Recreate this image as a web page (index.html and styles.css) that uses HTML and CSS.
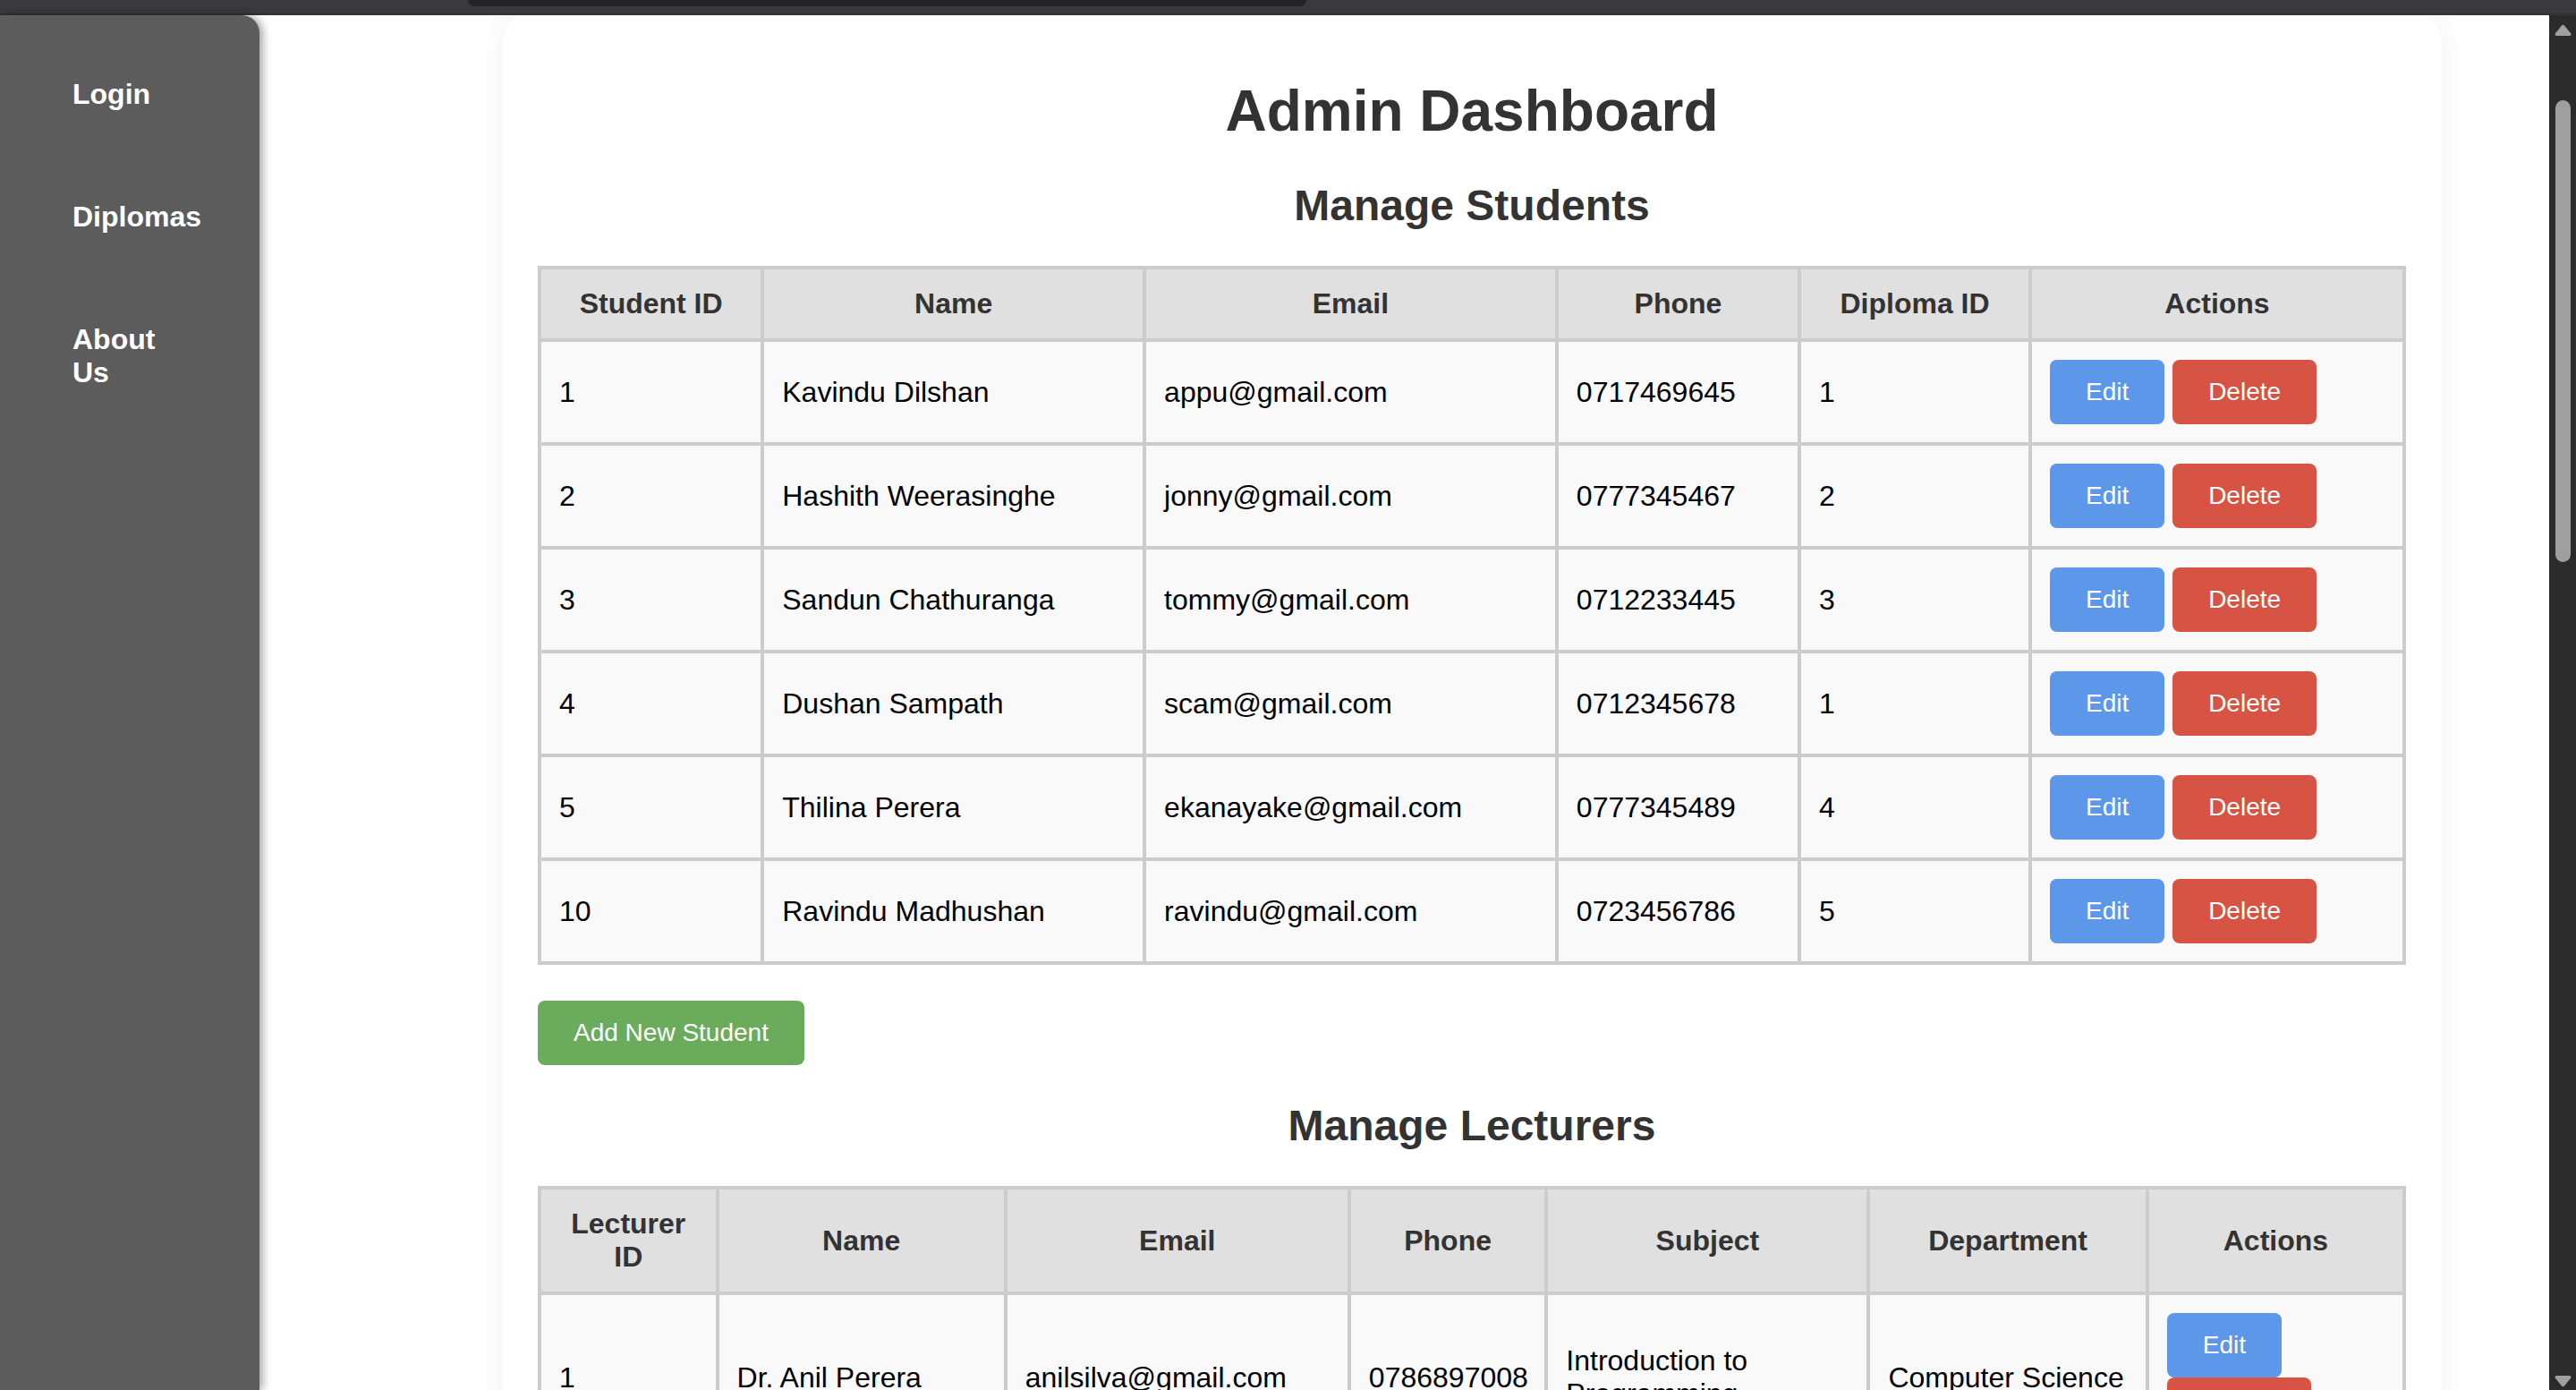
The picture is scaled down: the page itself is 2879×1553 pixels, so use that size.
FILE: index.html
```html
<!DOCTYPE html>
<html lang="en">
<head>
<meta charset="utf-8">
<title>Admin Dashboard</title>
<link rel="stylesheet" href="styles.css">
</head>
<body>
<div class="topbar"><div class="topbar-tab"></div></div>
<div class="layout">
  <nav class="sidebar">
    <a class="side-link" href="#">Login</a>
    <a class="side-link" href="#">Diplomas</a>
    <a class="side-link" href="#">About Us</a>
  </nav>
  <main class="main">
    <div class="card">
      <h1 class="page-title">Admin Dashboard</h1>

      <h2 class="section-title">Manage Students</h2>
      <table class="data-table">
        <thead>
          <tr><th>Student ID</th><th>Name</th><th>Email</th><th>Phone</th><th>Diploma ID</th><th>Actions</th></tr>
        </thead>
        <tbody>
          <tr><td>1</td><td>Kavindu Dilshan</td><td>appu@gmail.com</td><td>0717469645</td><td>1</td><td><button class="btn btn-edit">Edit</button> <button class="btn btn-delete">Delete</button></td></tr>
          <tr><td>2</td><td>Hashith Weerasinghe</td><td>jonny@gmail.com</td><td>0777345467</td><td>2</td><td><button class="btn btn-edit">Edit</button> <button class="btn btn-delete">Delete</button></td></tr>
          <tr><td>3</td><td>Sandun Chathuranga</td><td>tommy@gmail.com</td><td>0712233445</td><td>3</td><td><button class="btn btn-edit">Edit</button> <button class="btn btn-delete">Delete</button></td></tr>
          <tr><td>4</td><td>Dushan Sampath</td><td>scam@gmail.com</td><td>0712345678</td><td>1</td><td><button class="btn btn-edit">Edit</button> <button class="btn btn-delete">Delete</button></td></tr>
          <tr><td>5</td><td>Thilina Perera</td><td>ekanayake@gmail.com</td><td>0777345489</td><td>4</td><td><button class="btn btn-edit">Edit</button> <button class="btn btn-delete">Delete</button></td></tr>
          <tr><td>10</td><td>Ravindu Madhushan</td><td>ravindu@gmail.com</td><td>0723456786</td><td>5</td><td><button class="btn btn-edit">Edit</button> <button class="btn btn-delete">Delete</button></td></tr>
        </tbody>
      </table>
      <div class="add-row"><button class="btn btn-add">Add New Student</button></div>

      <h2 class="section-title">Manage Lecturers</h2>
      <table class="data-table lecturer-table">
        <colgroup>
          <col class="lc-id">
          <col class="lc-name">
          <col class="lc-email">
          <col class="lc-phone">
          <col class="lc-subject">
          <col class="lc-dept">
          <col class="lc-actions">
        </colgroup>
        <thead>
          <tr><th>Lecturer ID</th><th>Name</th><th>Email</th><th>Phone</th><th>Subject</th><th>Department</th><th>Actions</th></tr>
        </thead>
        <tbody>
          <tr><td>1</td><td>Dr. Anil Perera</td><td>anilsilva@gmail.com</td><td>0786897008</td><td>Introduction to Programming</td><td>Computer Science</td><td><button class="btn btn-edit">Edit</button> <button class="btn btn-delete">Delete</button></td></tr>
        </tbody>
      </table>
      <div class="add-row"><button class="btn btn-add">Add New Lecturer</button></div>
    </div>
  </main>
  <div class="scrollbar">
    <svg class="sb-arrow sb-up" width="19" height="13" viewBox="0 0 19 13"><path d="M8 1.5 Q9.5 0 11 1.5 L18.3 10.5 Q19 13 16.5 13 L2.5 13 Q0 13 0.7 10.5 Z" fill="#a0a0a0"/></svg>
    <div class="sb-thumb"></div>
    <div class="sb-fill"></div>
    <svg class="sb-arrow sb-down" width="19" height="13" viewBox="0 0 19 13"><path d="M8 11.5 Q9.5 13 11 11.5 L18.3 2.5 Q19 0 16.5 0 L2.5 0 Q0 0 0.7 2.5 Z" fill="#a0a0a0"/></svg>
  </div>
</div>
</body>
</html>
```

FILE: styles.css
```css
html, body {
  margin: 0;
  padding: 0;
  height: 100%;
  overflow: hidden;
  background: #ffffff;
  font-family: "Liberation Sans", Arial, sans-serif;
}

.topbar {
  height: 15px;
  background: #3a393e;
  border-bottom: 2px solid #323136;
}

.topbar-tab {
  margin-left: 523px;
  width: 937px;
  height: 7px;
  background: #242328;
  border-radius: 0 0 7px 7px;
}

.layout {
  display: flex;
  height: calc(100% - 17px);
}

.sidebar {
  width: 290px;
  flex-shrink: 0;
  background: #5c5c5c;
  border-top-right-radius: 20px;
  box-shadow: 4px 0 10px rgba(0, 0, 0, 0.35);
  padding-top: 20px;
  position: relative;
  z-index: 1;
}

.side-link {
  display: block;
  width: 120px;
  padding: 50px 0 50px 81px;
  color: #ffffff;
  font-size: 32px;
  font-weight: bold;
  text-decoration: none;
}

.main {
  flex: 1;
  min-width: 0;
  overflow: hidden;
  padding: 0 120px 0 271px;
}

.card {
  margin-top: -7px;
  padding: 34px 40px 40px;
  background: #ffffff;
  border-radius: 40px;
  box-shadow: 0 0 30px rgba(0, 0, 0, 0.06);
}

.page-title {
  font-size: 64px;
  font-weight: bold;
  color: #333333;
  text-align: center;
  margin: 43px 0 41px;
}

.section-title {
  font-size: 48px;
  font-weight: bold;
  color: #333333;
  text-align: center;
  margin: 40px 0;
}

.data-table {
  width: 100%;
  border-collapse: collapse;
  border: 4px solid #cccccc;
  font-size: 32px;
}

.lecturer-table {
  table-layout: fixed;
}

.lc-id { width: 9.53%; }
.lc-name { width: 15.46%; }
.lc-email { width: 18.43%; }
.lc-phone { width: 10.58%; }
.lc-subject { width: 17.28%; }
.lc-dept { width: 14.94%; }
.lc-actions { width: 13.78%; }

.data-table th,
.data-table td {
  border: 4px solid #cccccc;
  padding: 20px;
}

.data-table th {
  background: #e0e0e0;
  color: #333333;
  font-weight: bold;
  text-align: center;
}

.data-table td {
  background: #f9f9f9;
  color: #000000;
  text-align: left;
}

.btn {
  display: inline-block;
  font-family: "Liberation Sans", Arial, sans-serif;
  font-size: 28px;
  line-height: normal;
  padding: 20px 40px;
  border: none;
  border-radius: 8px;
  color: #ffffff;
  margin: 0;
  cursor: pointer;
}

.btn-edit {
  background: #5c97ea;
}

.btn-delete {
  background: #d75444;
}

.btn-add {
  background: #6bac5c;
}

.add-row {
  margin-top: 40px;
}

.scrollbar {
  width: 30px;
  flex-shrink: 0;
  background: #2b2b2b;
  display: flex;
  flex-direction: column;
  align-items: center;
}

.sb-arrow {
  display: block;
  flex-shrink: 0;
}

.sb-up {
  margin-top: 10px;
}

.sb-thumb {
  margin-top: 72px;
  width: 17px;
  height: 516px;
  border-radius: 9px;
  background: #9f9f9f;
}

.sb-fill {
  flex: 1;
}

.sb-down {
  margin-bottom: 3px;
}
```
